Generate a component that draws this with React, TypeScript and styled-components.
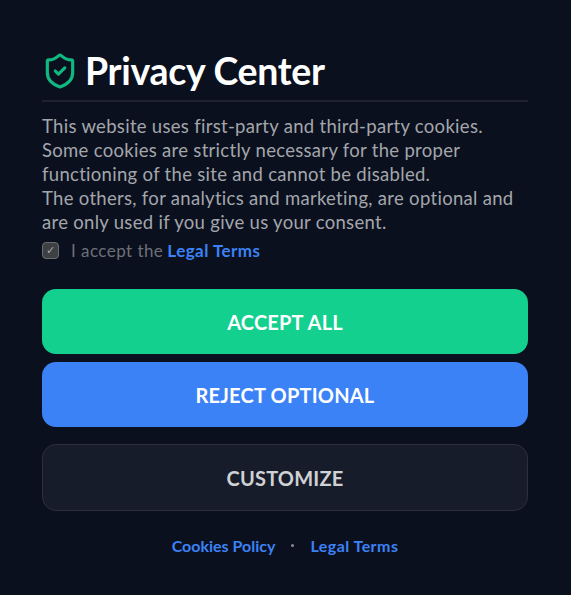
import styled, { createGlobalStyle } from "styled-components"

const GlobalStyle = createGlobalStyle`
  html, body {
    margin: 0;
    background: #0b101e;
    font-family: "Lato", "Open Sans", sans-serif;
  }
`

const Page = styled.div`
  width: 571px;
  height: 595px;
  box-sizing: border-box;
  padding: 42px 43px 0 42px;
  background: #0b101e;
  display: flex;
  flex-direction: column;
`

const Header = styled.div`
  display: flex;
  align-items: center;
  gap: 6px;
  height: 57px;
  padding-bottom: 1px;
  border-bottom: 2px solid #1f222e;
`

const ShieldSvg = styled.svg`
  margin-left: -1px;
`

const Title = styled.h1`
  margin: 0;
  color: #ffffff;
  font-size: 37.5px;
  font-weight: 700;
  letter-spacing: -0.3px;
  line-height: 48px;
`

const Description = styled.p`
  margin: 12px 0 0;
  color: #a3a6ac;
  font-size: 18.5px;
  line-height: 24px;
  letter-spacing: 0.3px;
`

const Consent = styled.label`
  display: flex;
  align-items: center;
  gap: 12px;
  margin-top: 4px;
  height: 24px;
  color: #6d7078;
  font-size: 17px;
  letter-spacing: 0.45px;
`

const CheckBox = styled.span`
  width: 15px;
  height: 15px;
  border: 1.5px solid #6a6c70;
  border-radius: 4px;
  background: #3e4144;
  color: #a9abad;
  font-size: 11px;
  display: flex;
  align-items: center;
  justify-content: center;
`

const Strong = styled.a`
  color: #3b82f6;
  font-weight: 700;
  margin-left: 4px;
`

const Actions = styled.div`
  display: flex;
  flex-direction: column;
  margin-top: 27px;
`

const Button = styled.button<{ $bg: string; $color: string; $mt: number; $h: number; $border?: string }>`
  height: ${(p) => p.$h}px;
  margin-top: ${(p) => p.$mt}px;
  background: ${(p) => p.$bg};
  color: ${(p) => p.$color};
  border: ${(p) => (p.$border ? `1px solid ${p.$border}` : "none")};
  border-radius: 14px;
  font-family: inherit;
  font-size: 20px;
  font-weight: 700;
  letter-spacing: 0.2px;
`

const Footer = styled.div`
  display: flex;
  justify-content: center;
  align-items: center;
  gap: 16px;
  margin-top: 24px;
  height: 20px;
  font-size: 16px;
`

const FooterLink = styled.a<{ $spacing?: number }>`
  color: #3b82f6;
  font-weight: 700;
  letter-spacing: ${(p) => p.$spacing ?? 0}px;
`

const Dot = styled.span`
  width: 3px;
  height: 3px;
  border-radius: 50%;
  background: #8a8d94;
`

function ShieldIcon() {
  return (
    <ShieldSvg width="38" height="38" viewBox="0 0 24 24" fill="none" stroke="#10b981" strokeWidth="2" strokeLinecap="round" strokeLinejoin="round">
      <path d="M20 13c0 5-3.5 7.5-7.66 8.95a1 1 0 0 1-.67-.01C7.5 20.5 4 18 4 13V6a1 1 0 0 1 1-1c2 0 4.5-1.2 6.24-2.72a1.17 1.17 0 0 1 1.52 0C14.51 3.81 17 5 19 5a1 1 0 0 1 1 1z" />
      <path d="m9 12 2 2 4-4" />
    </ShieldSvg>
  )
}

export default function App() {
  return (
    <Page>
      <GlobalStyle />
      <Header>
        <ShieldIcon />
        <Title>Privacy Center</Title>
      </Header>
      <Description>
        This website uses first-party and third-party cookies.
        <br />
        Some cookies are strictly necessary for the proper
        <br />
        functioning of the site and cannot be disabled.
        <br />
        The others, for analytics and marketing, are optional and
        <br />
        are only used if you give us your consent.
      </Description>
      <Consent>
        <CheckBox>✓</CheckBox>
        <span>
          I accept the<Strong>Legal Terms</Strong>
        </span>
      </Consent>
      <Actions>
        <Button $bg="#13d08f" $color="#ffffff" $mt={0} $h={65}>ACCEPT ALL</Button>
        <Button $bg="#3b82f6" $color="#ffffff" $mt={8} $h={65}>REJECT OPTIONAL</Button>
        <Button $bg="#171c2a" $color="#d0d1d4" $mt={17} $h={67} $border="#2c303c">CUSTOMIZE</Button>
      </Actions>
      <Footer>
        <FooterLink>Cookies Policy</FooterLink>
        <Dot />
        <FooterLink $spacing={0.45}>Legal Terms</FooterLink>
      </Footer>
    </Page>
  )
}
